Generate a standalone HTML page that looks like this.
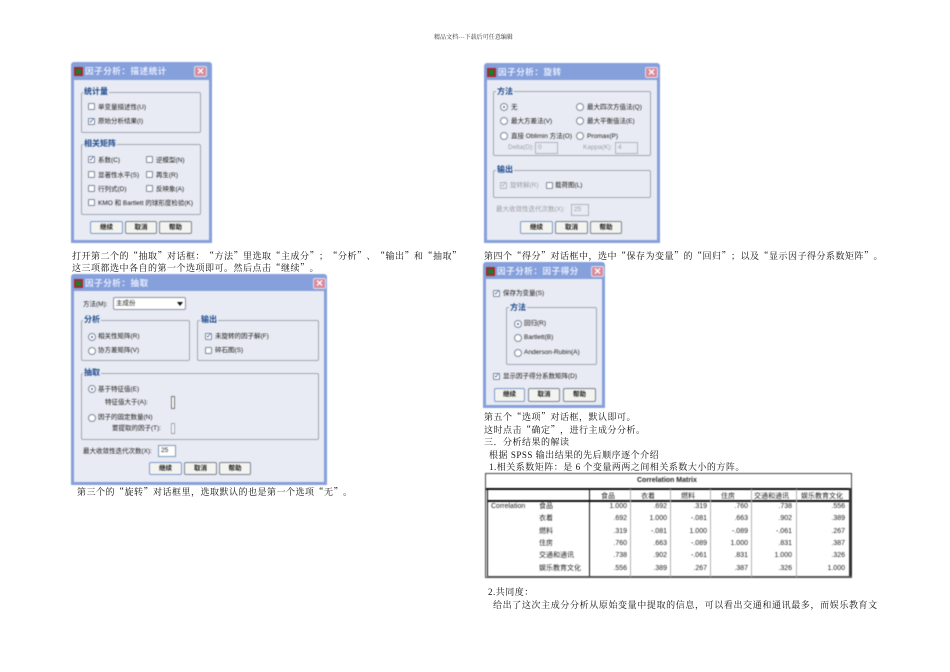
<!DOCTYPE html>
<html lang="zh"><head><meta charset="utf-8"><style>
html,body{margin:0;padding:0;background:#fff}
#p{position:relative;width:950px;height:672px;overflow:hidden;background:#fff;font-family:"Noto Serif CJK SC","Liberation Serif",serif;color:#111;text-spacing-trim:space-all}
.t{position:absolute;white-space:nowrap;font-size:9px;line-height:11px;letter-spacing:.5px}
.e{font-family:"Liberation Serif",serif}
#d{position:absolute;left:0;top:0;width:950px;height:672px;filter:blur(.42px)}
#d div,#d span{position:absolute;box-sizing:border-box;white-space:nowrap}
.w{background:#86a0dc;border-radius:3px 3px 0 0}
.b{background:#e8ebf3}
.ti{font:bold 8.5px/11px "Noto Sans CJK SC","Liberation Sans",sans-serif;color:#e6ecfc;letter-spacing:.6px}
.ic{width:9px;height:9px;background:#17802c;border:2px solid #a8282c}
.x{width:13px;height:11px;background:#d98a9c;border:1px solid #dfe0f0;border-radius:2px;color:#fff;font:bold 12px/9px "Liberation Sans",sans-serif;text-align:center}
.g{border:1px solid #a2a7b2;border-radius:2px}
.gl{background:#e8ebf3;color:#1d4a8c;font:bold 8px/10px "Noto Sans CJK SC","Liberation Sans",sans-serif;padding:0 1px}
.l{font:6.5px/9px "Liberation Sans","Noto Sans CJK SC",sans-serif;color:#1a1a1a}
.d{color:#9a9ea6}
.c{width:7px;height:7px;border:1px solid #7f8a9c;background:#fff;border-radius:1px}
.cc{color:#1f45a0;font:bold 7px/6px "Liberation Sans","DejaVu Sans",sans-serif;text-align:center}
.r{width:8px;height:8px;border:1px solid #7f8a9c;background:#fff;border-radius:50%}
.rr:after{content:"";position:absolute;left:2px;top:2px;width:2px;height:2px;background:#3f62b0;border-radius:50%}
.bt{height:13px;background:#f3f3ef;border:1px solid #7a8496;border-radius:2px;text-align:center;font:bold 6.5px/11px "Liberation Sans","Noto Sans CJK SC",sans-serif;color:#1a1a1a}
.df{border:1.5px solid #7f9ad0}
.in{background:#fff;border:1px solid #7f9db9;font:6.5px/10px "Liberation Sans",sans-serif;padding-left:2px;color:#222}
.tb{font:7px/9px "Liberation Sans","Noto Sans CJK SC",sans-serif;color:#222}
.n{text-align:right}
.ln{background:#111}
</style></head><body><div id="p">

<div class="t" style="left:434px;top:32px;font-size:6px;line-height:9px;letter-spacing:.05px;color:#333">精品文档---下载后可任意编辑</div>

<div class="t" style="left:72px;top:250px">打开第二个的“抽取”对话框：“方法”里选取“主成分”；“分析”、“输出”和“抽取”</div>
<div class="t" style="left:72px;top:262px">这三项都选中各自的第一个选项即可。然后点击“继续”。</div>
<div class="t" style="left:77px;top:486px">第三个的“旋转”对话框里，选取默认的也是第一个选项“无”。</div>
<div class="t" style="left:484px;top:250px">第四个“得分”对话框中，选中“保存为变量”的“回归”；以及“显示因子得分系数矩阵”。</div>
<div class="t" style="left:484px;top:411px">第五个“选项”对话框，默认即可。</div>
<div class="t" style="left:484px;top:424px">这时点击“确定”，进行主成分分析。</div>
<div class="t" style="left:484px;top:436px">三．分析结果的解读</div>
<div class="t" style="left:489px;top:449px">根据 <span class="e">SPSS</span> 输出结果的先后顺序逐个介绍</div>
<div class="t" style="left:489px;top:461px"><span class="e">1.</span>相关系数矩阵：是 <span class="e">6</span> 个变量两两之间相关系数大小的方阵。</div>
<div class="t" style="left:488px;top:586px"><span class="e">2.</span>共同度：</div>
<div class="t" style="left:493px;top:599px;letter-spacing:.62px">给出了这次主成分分析从原始变量中提取的信息，可以看出交通和通讯最多，而娱乐教育文</div>

<div id="d">
<!-- dialog 1 -->
<div class="w" style="left:71px;top:62px;width:141px;height:181px"></div>
<div class="b" style="left:74px;top:80px;width:135px;height:160px"></div>
<div class="ic" style="left:74px;top:67px"></div>
<span class="ti" style="left:85px;top:66px">因子分析：描述统计</span>
<div class="x" style="left:194px;top:66px">×</div>
<div class="g" style="left:81px;top:92px;width:120px;height:41px"></div>
<span class="gl" style="left:83px;top:87px">统计量</span>
<div class="c" style="left:88px;top:103px"></div><span class="l" style="left:98px;top:103px">单变量描述性(U)</span>
<div class="c cc" style="left:88px;top:118px">✓</div><span class="l" style="left:98px;top:117px">原始分析结果(I)</span>
<div class="g" style="left:81px;top:144px;width:120px;height:71px"></div>
<span class="gl" style="left:83px;top:139px">相关矩阵</span>
<div class="c cc" style="left:88px;top:156px">✓</div><span class="l" style="left:98px;top:156px">系数(C)</span>
<div class="c" style="left:146px;top:156px"></div><span class="l" style="left:156px;top:156px">逆模型(N)</span>
<div class="c" style="left:88px;top:171px"></div><span class="l" style="left:98px;top:171px">显著性水平(S)</span>
<div class="c" style="left:146px;top:171px"></div><span class="l" style="left:156px;top:171px">再生(R)</span>
<div class="c" style="left:88px;top:185px"></div><span class="l" style="left:98px;top:185px">行列式(D)</span>
<div class="c" style="left:146px;top:185px"></div><span class="l" style="left:156px;top:185px">反映象(A)</span>
<div class="c" style="left:88px;top:199px"></div><span class="l" style="left:98px;top:199px">KMO 和 Bartlett 的球形度检验(K)</span>
<div class="bt df" style="left:90px;top:221px;width:33px">继续</div>
<div class="bt" style="left:125px;top:221px;width:32px">取消</div>
<div class="bt" style="left:159px;top:221px;width:33px">帮助</div>

<!-- dialog 2 -->
<div class="w" style="left:71px;top:274px;width:256px;height:211px"></div>
<div class="b" style="left:74px;top:291px;width:250px;height:191px"></div>
<div class="ic" style="left:74px;top:279px"></div>
<span class="ti" style="left:85px;top:278px">因子分析：抽取</span>
<div class="x" style="left:313px;top:278px">×</div>
<span class="l" style="left:83px;top:300px">方法(M):</span>
<div class="in" style="left:113px;top:297px;width:73px;height:13px;border-color:#8a94a6;border-radius:2px;font-family:'Liberation Sans','Noto Sans CJK SC',sans-serif;line-height:11px">主成份</div>
<div style="left:177px;top:302px;width:0;height:0;border:3px solid transparent;border-top:4px solid #111;border-bottom:0"></div>
<div class="g" style="left:81px;top:320px;width:109px;height:41px"></div>
<span class="gl" style="left:83px;top:315px">分析</span>
<div class="r rr" style="left:88px;top:333px"></div><span class="l" style="left:98px;top:332px">相关性矩阵(R)</span>
<div class="r" style="left:88px;top:347px"></div><span class="l" style="left:98px;top:346px">协方差矩阵(V)</span>
<div class="g" style="left:197px;top:320px;width:122px;height:41px"></div>
<span class="gl" style="left:200px;top:315px">输出</span>
<div class="c cc" style="left:205px;top:333px">✓</div><span class="l" style="left:215px;top:332px">未旋转的因子解(F)</span>
<div class="c" style="left:205px;top:347px"></div><span class="l" style="left:215px;top:346px">碎石图(S)</span>
<div class="g" style="left:81px;top:373px;width:238px;height:67px"></div>
<span class="gl" style="left:83px;top:368px">抽取</span>
<div class="r rr" style="left:88px;top:385px"></div><span class="l" style="left:98px;top:385px">基于特征值(E)</span>
<span class="l" style="left:105px;top:398px">特征值大于(A):</span>
<div class="in" style="left:171px;top:396px;width:4px;height:13px;padding:0;border-color:#777"></div>
<div class="r" style="left:88px;top:414px"></div><span class="l" style="left:98px;top:413px">因子的固定数量(N)</span>
<span class="l" style="left:112px;top:424px">要提取的因子(T):</span>
<div class="in" style="left:171px;top:423px;width:4px;height:11px;padding:0;border-color:#a0a4ac"></div>
<span class="l" style="left:83px;top:447px">最大收敛性迭代次数(X):</span>
<div class="in" style="left:158px;top:445px;width:18px;height:12px">25</div>
<div class="bt df" style="left:149px;top:462px;width:33px">继续</div>
<div class="bt" style="left:184px;top:462px;width:33px">取消</div>
<div class="bt" style="left:219px;top:462px;width:32px">帮助</div>

<!-- dialog 3 -->
<div class="w" style="left:484px;top:63px;width:176px;height:180px"></div>
<div class="b" style="left:487px;top:80px;width:170px;height:160px"></div>
<div class="ic" style="left:487px;top:68px"></div>
<span class="ti" style="left:498px;top:67px">因子分析：旋转</span>
<div class="x" style="left:645px;top:67px">×</div>
<div class="g" style="left:493px;top:91px;width:158px;height:65px"></div>
<span class="gl" style="left:496px;top:87px">方法</span>
<div class="r rr" style="left:500px;top:103px"></div><span class="l" style="left:511px;top:103px">无</span>
<div class="r" style="left:576px;top:103px"></div><span class="l" style="left:587px;top:103px">最大四次方值法(Q)</span>
<div class="r" style="left:500px;top:117px"></div><span class="l" style="left:511px;top:117px">最大方差法(V)</span>
<div class="r" style="left:576px;top:117px"></div><span class="l" style="left:587px;top:117px">最大平衡值法(E)</span>
<div class="r" style="left:500px;top:132px"></div><span class="l" style="left:511px;top:132px">直接 Oblimin 方法(O)</span>
<div class="r" style="left:576px;top:132px"></div><span class="l" style="left:587px;top:132px">Promax(P)</span>
<span class="l d" style="left:508px;top:143px">Delta(D):</span>
<div class="in d" style="left:535px;top:142px;width:23px;height:12px;background:#e8ebf3;border-color:#b0b4bc;color:#9a9ea6">0</div>
<span class="l d" style="left:583px;top:143px">Kappa(K):</span>
<div class="in d" style="left:615px;top:142px;width:23px;height:12px;background:#e8ebf3;border-color:#b0b4bc;color:#9a9ea6">4</div>
<div class="g" style="left:493px;top:170px;width:158px;height:28px"></div>
<span class="gl" style="left:496px;top:165px">输出</span>
<div class="c cc" style="left:500px;top:182px;color:#9a9ea6;background:#e8ebf3;border-color:#b0b4bc">✓</div><span class="l d" style="left:510px;top:181px">旋转解(R)</span>
<div class="c" style="left:546px;top:182px"></div><span class="l" style="left:555px;top:181px">载荷图(L)</span>
<span class="l d" style="left:496px;top:205px">最大收敛性迭代次数(X):</span>
<div class="in d" style="left:571px;top:204px;width:18px;height:12px;background:#e8ebf3;border-color:#b0b4bc;color:#9a9ea6">25</div>
<div class="bt df" style="left:520px;top:221px;width:33px">继续</div>
<div class="bt" style="left:555px;top:221px;width:33px">取消</div>
<div class="bt" style="left:590px;top:221px;width:32px">帮助</div>

<!-- dialog 4 -->
<div class="w" style="left:483px;top:262px;width:122px;height:146px"></div>
<div class="b" style="left:486px;top:279px;width:116px;height:126px"></div>
<div class="ic" style="left:486px;top:267px"></div>
<span class="ti" style="left:497px;top:266px">因子分析：因子得分</span>
<div class="x" style="left:591px;top:266px">×</div>
<div class="c cc" style="left:493px;top:290px">✓</div><span class="l" style="left:503px;top:289px">保存为变量(S)</span>
<div class="g" style="left:506px;top:307px;width:91px;height:58px"></div>
<span class="gl" style="left:509px;top:303px">方法</span>
<div class="r rr" style="left:514px;top:320px"></div><span class="l" style="left:524px;top:319px">回归(R)</span>
<div class="r" style="left:514px;top:334px"></div><span class="l" style="left:524px;top:333px">Bartlett(B)</span>
<div class="r" style="left:514px;top:349px"></div><span class="l" style="left:524px;top:348px">Anderson-Rubin(A)</span>
<div class="c cc" style="left:493px;top:373px">✓</div><span class="l" style="left:503px;top:372px">显示因子得分系数矩阵(D)</span>
<div class="bt df" style="left:494px;top:388px;width:31px;height:14px">继续</div>
<div class="bt" style="left:528px;top:388px;width:32px;height:14px">取消</div>
<div class="bt" style="left:563px;top:388px;width:33px;height:14px">帮助</div>

<!-- table -->
<div style="left:485px;top:473px;width:367px;height:105px;border:1px solid #444;background:#fff"></div>
<div class="ln" style="left:486px;top:488px;width:365px;height:2px"></div>
<div class="ln" style="left:487px;top:488px;width:1px;height:89px"></div>
<div class="ln" style="left:487px;top:500px;width:364px;height:2px"></div>
<div class="ln" style="left:589px;top:488px;width:1px;height:89px"></div>
<div class="ln" style="left:849px;top:488px;width:3px;height:89px;background:#333"></div>
<div style="left:487px;top:576px;width:365px;height:2px;background:#555"></div>
<div style="left:630px;top:489px;width:1px;height:88px;background:#b4b4b4"></div>
<div style="left:670px;top:489px;width:1px;height:88px;background:#b4b4b4"></div>
<div style="left:710px;top:489px;width:1px;height:88px;background:#b4b4b4"></div>
<div style="left:751px;top:489px;width:1px;height:88px;background:#b4b4b4"></div>
<div style="left:796px;top:489px;width:1px;height:88px;background:#b4b4b4"></div>
<span class="tb" style="left:637px;top:476px;font-weight:bold">Correlation Matrix</span>

<span class="tb" style="left:601px;top:492px">食品</span><span class="tb" style="left:641px;top:492px">衣着</span><span class="tb" style="left:681px;top:492px">燃料</span><span class="tb" style="left:721px;top:492px">住房</span><span class="tb" style="left:754px;top:492px">交通和通讯</span><span class="tb" style="left:801px;top:492px">娱乐教育文化</span>

<span class="tb" style="left:491px;top:502px">Correlation</span>
<span class="tb" style="left:539px;top:502px">食品</span><span class="tb" style="left:539px;top:514px">衣着</span><span class="tb" style="left:539px;top:527px">燃料</span><span class="tb" style="left:539px;top:539px">住房</span><span class="tb" style="left:539px;top:551px">交通和通讯</span><span class="tb" style="left:539px;top:564px">娱乐教育文化</span>

<span class="tb n" style="left:590px;width:37px;top:502px">1.000</span><span class="tb n" style="left:630px;width:37px;top:502px">.692</span><span class="tb n" style="left:670px;width:37px;top:502px">.319</span><span class="tb n" style="left:711px;width:37px;top:502px">.760</span><span class="tb n" style="left:755px;width:37px;top:502px">.738</span><span class="tb n" style="left:808px;width:37px;top:502px">.556</span>
<span class="tb n" style="left:590px;width:37px;top:514px">.692</span><span class="tb n" style="left:630px;width:37px;top:514px">1.000</span><span class="tb n" style="left:670px;width:37px;top:514px">-.081</span><span class="tb n" style="left:711px;width:37px;top:514px">.663</span><span class="tb n" style="left:755px;width:37px;top:514px">.902</span><span class="tb n" style="left:808px;width:37px;top:514px">.389</span>
<span class="tb n" style="left:590px;width:37px;top:527px">.319</span><span class="tb n" style="left:630px;width:37px;top:527px">-.081</span><span class="tb n" style="left:670px;width:37px;top:527px">1.000</span><span class="tb n" style="left:711px;width:37px;top:527px">-.089</span><span class="tb n" style="left:755px;width:37px;top:527px">-.061</span><span class="tb n" style="left:808px;width:37px;top:527px">.267</span>
<span class="tb n" style="left:590px;width:37px;top:539px">.760</span><span class="tb n" style="left:630px;width:37px;top:539px">.663</span><span class="tb n" style="left:670px;width:37px;top:539px">-.089</span><span class="tb n" style="left:711px;width:37px;top:539px">1.000</span><span class="tb n" style="left:755px;width:37px;top:539px">.831</span><span class="tb n" style="left:808px;width:37px;top:539px">.387</span>
<span class="tb n" style="left:590px;width:37px;top:551px">.738</span><span class="tb n" style="left:630px;width:37px;top:551px">.902</span><span class="tb n" style="left:670px;width:37px;top:551px">-.061</span><span class="tb n" style="left:711px;width:37px;top:551px">.831</span><span class="tb n" style="left:755px;width:37px;top:551px">1.000</span><span class="tb n" style="left:808px;width:37px;top:551px">.326</span>
<span class="tb n" style="left:590px;width:37px;top:564px">.556</span><span class="tb n" style="left:630px;width:37px;top:564px">.389</span><span class="tb n" style="left:670px;width:37px;top:564px">.267</span><span class="tb n" style="left:711px;width:37px;top:564px">.387</span><span class="tb n" style="left:755px;width:37px;top:564px">.326</span><span class="tb n" style="left:808px;width:37px;top:564px">1.000</span>
</div>
</div></body></html>
